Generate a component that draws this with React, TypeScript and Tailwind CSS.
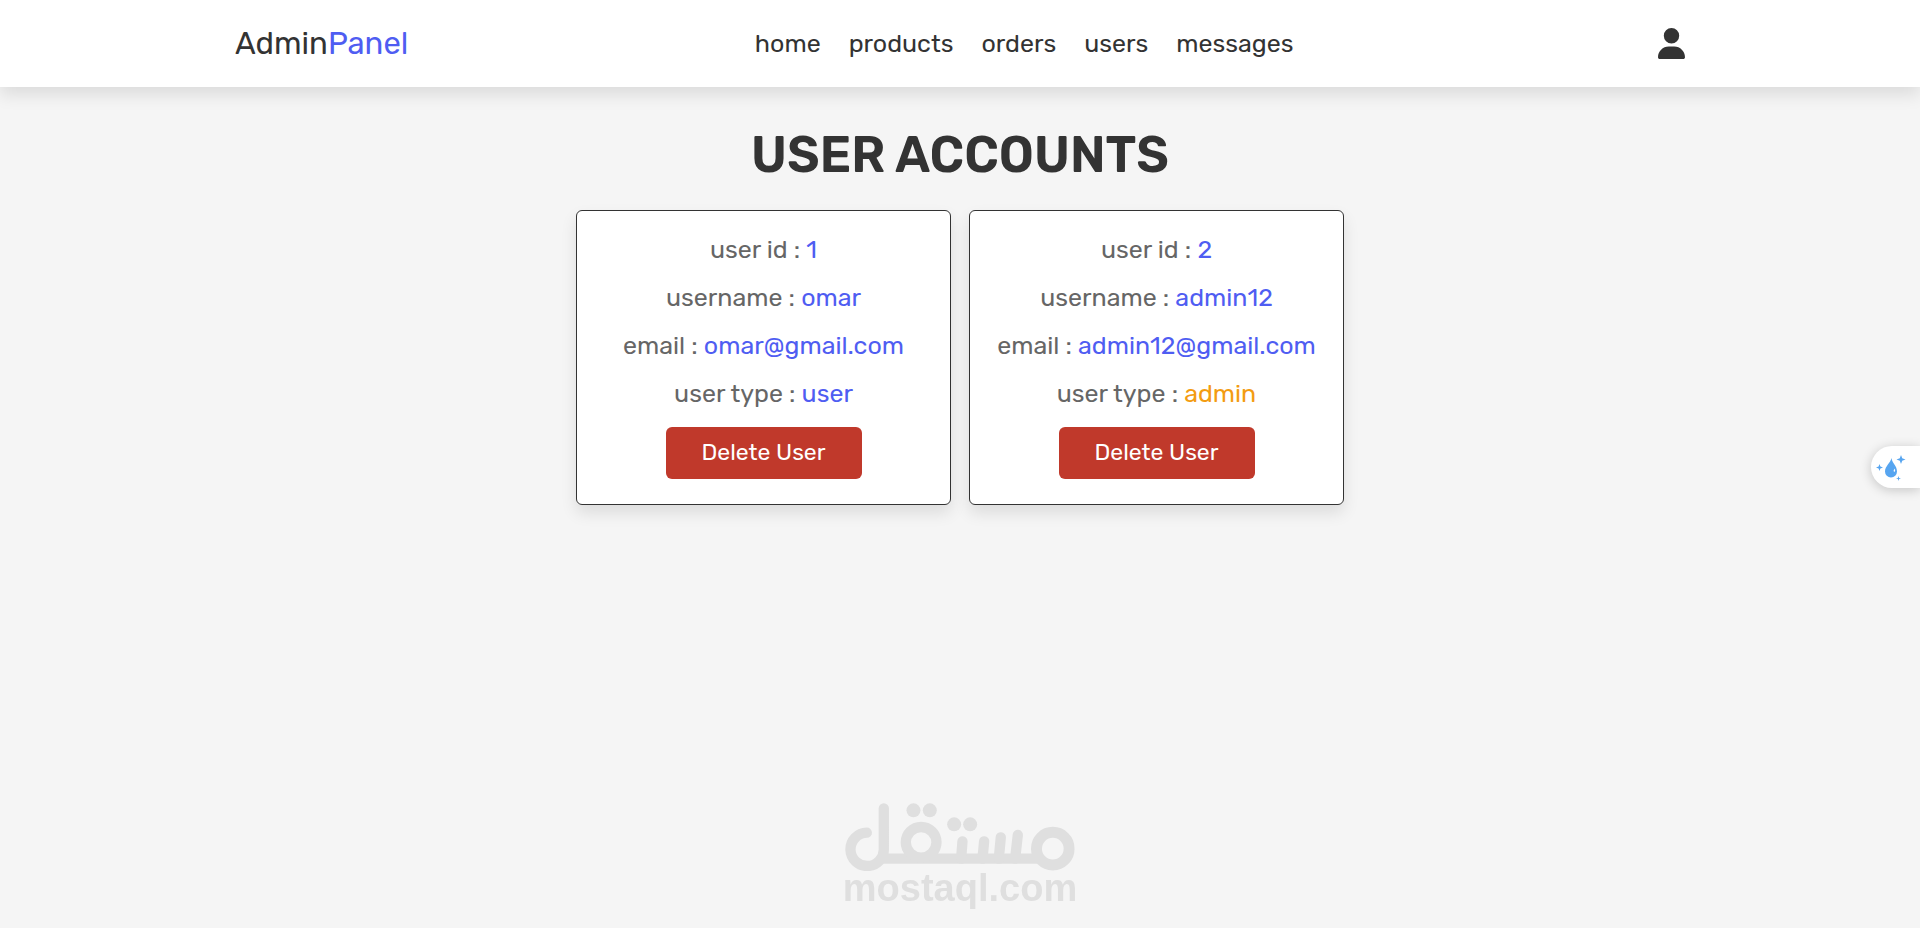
import { FaUser } from 'react-icons/fa6';

type Account = {
  id: number;
  name: string;
  email: string;
  type: 'user' | 'admin';
};

const links = ['home', 'products', 'orders', 'users', 'messages'];

const accounts: Account[] = [
  { id: 1, name: 'omar', email: 'omar@gmail.com', type: 'user' },
  { id: 2, name: 'admin12', email: 'admin12@gmail.com', type: 'admin' },
];

function Header() {
  return (
    <header className="sticky top-0 z-10 bg-white shadow-[0_8px_16px_rgba(0,0,0,0.1)]">
      <div className="mx-auto flex h-[87px] max-w-[1450px] items-center justify-between">
        <a href="#" className="text-[31px] leading-[48px] text-[#333]">
          Admin<span className="text-[#4f5df2]">Panel</span>
        </a>
        <nav className="flex">
          {links.map((link) => (
            <a key={link} href="#" className="mx-[14px] text-[25px] text-[#333]">
              {link}
            </a>
          ))}
        </nav>
        <button type="button" aria-label="account" className="ml-[18px] cursor-pointer text-[#333]">
          <FaUser className="h-[31px] w-[27px]" />
        </button>
      </div>
    </header>
  );
}

function AccountCard({ account }: { account: Account }) {
  return (
    <div className="w-[375px] rounded-[6px] border border-[#333] bg-white pt-[15px] pb-[25px] text-center shadow-[0_8px_16px_rgba(0,0,0,0.1)]">
      <p className="text-[25px] leading-[48px] text-[#666]">
        user id : <span className="text-[#4f5df2]">{account.id}</span>
      </p>
      <p className="text-[25px] leading-[48px] text-[#666]">
        username : <span className="text-[#4f5df2]">{account.name}</span>
      </p>
      <p className="text-[25px] leading-[48px] text-[#666]">
        email : <span className="text-[#4f5df2]">{account.email}</span>
      </p>
      <p className="text-[25px] leading-[48px] text-[#666]">
        user type :{' '}
        <span className={account.type === 'admin' ? 'text-[#f39c12]' : 'text-[#4f5df2]'}>
          {account.type}
        </span>
      </p>
      <button
        type="button"
        className="mt-[9px] h-[52px] w-[196px] cursor-pointer rounded-[6px] bg-[#c0392b] pb-px text-[23px] text-white"
      >
        Delete User
      </button>
    </div>
  );
}

function Watermark() {
  return (
    <div className="pointer-events-none fixed bottom-[20px] left-1/2 flex -translate-x-1/2 flex-col items-center text-[#dfdfdf]">
      <svg
        viewBox="75 68 690 204"
        className="h-[68px] w-[230px]"
        fill="none"
        stroke="currentColor"
        strokeWidth="31"
        strokeLinecap="round"
      >
        <path d="M192 84V205A50 50 0 1 1 141 157" />
        <path d="M185 235H660" strokeLinecap="butt" />
        <circle cx="304" cy="186" r="46" />
        <circle cx="699" cy="205" r="49" strokeWidth="33" />
        <path d="M428 183L424 235M493 183L488 235M543 171L537 235M594 164L586 235" />
        <g fill="currentColor" stroke="none">
          <circle cx="281" cy="90" r="21" />
          <circle cx="330" cy="90" r="21" />
          <circle cx="403" cy="132" r="21" />
          <circle cx="451" cy="132" r="21" />
        </g>
      </svg>
      <span className="pb-[2px] font-['Liberation_Sans',Arial,sans-serif] text-[38px] leading-[35px] font-bold">
        mostaql.com
      </span>
    </div>
  );
}

function DropWidget() {
  return (
    <button
      type="button"
      aria-label="assistant"
      className="fixed top-[446px] right-0 h-[42px] w-[49px] cursor-pointer rounded-l-full bg-white shadow-[0_2px_12px_rgba(0,0,0,0.2)]"
    >
      <svg viewBox="0 0 49 42" className="h-[42px] w-[49px]" fill="#57a5f0">
        <path d="M20.500 12C21 17 26 19.500 26 25.500A6 6 0 0 1 14 25.500C14 20 19.500 17 20.500 12Z" />
        <path d="M30 9L31.200 12.300L34.500 13.500L31.200 14.700L30 18L28.800 14.700L25.500 13.500L28.800 12.300Z" />
        <path d="M8.500 18L9.400 20.600L12 21.500L9.400 22.400L8.500 25L7.600 22.400L5 21.500L7.600 20.600Z" />
        <path d="M27.500 30L28.100 31.900L30 32.500L28.100 33.100L27.500 35L26.900 33.100L25 32.500L26.900 31.900Z" />
        <path d="M23.500 22.500Q25 25 23 26Q22 24.500 23.500 22.500Z" fill="#fff" />
      </svg>
    </button>
  );
}

export default function App() {
  return (
    <div className="min-h-screen bg-[#f5f5f5] font-['Rubik',Roboto,sans-serif]">
      <Header />
      <main className="pt-[38px]">
        <h1 className="text-center text-[50px] leading-[60px] font-semibold text-[#333] uppercase">
          user accounts
        </h1>
        <div className="mt-[25px] flex flex-wrap justify-center gap-[18px]">
          {accounts.map((account) => (
            <AccountCard key={account.id} account={account} />
          ))}
        </div>
      </main>
      <Watermark />
      <DropWidget />
    </div>
  );
}
